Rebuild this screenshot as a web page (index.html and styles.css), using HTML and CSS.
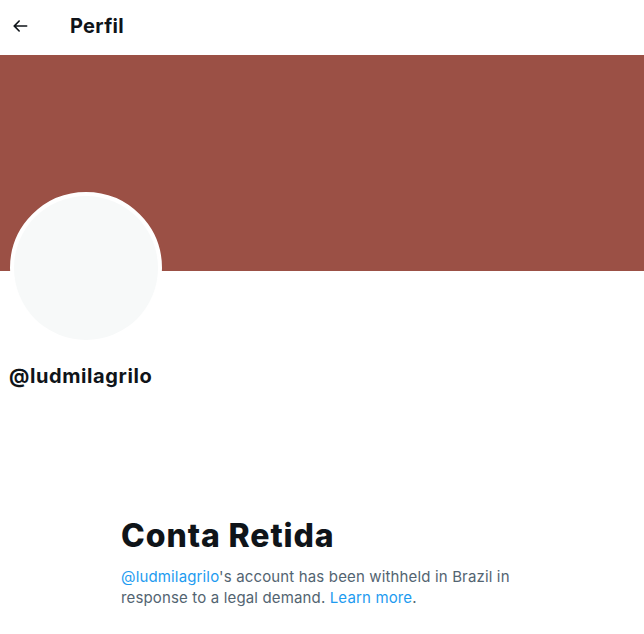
FILE: index.html
```html
<!DOCTYPE html>
<html lang="pt">
<head>
  <meta charset="UTF-8" />
  <title>Perfil</title>
  <link rel="stylesheet" href="styles.css">
</head>
<body>
  <!-- Cabeçalho -->
  <div class="topbar">
    <div class="back-btn">
      <svg viewBox="0 0 24 24" width="20" height="20"><path d="M20 11H7.414l4.293-4.293c.39-.39.39-1.023 0-1.414s-1.023-.39-1.414 0l-6 6c-.39.39-.39 1.023 0 1.414l6 6c.195.195.45.293.707.293s.512-.098.707-.293c.39-.39.39-1.023 0-1.414L7.414 13H20c.553 0 1-.447 1-1s-.447-1-1-1z"/></svg>
    </div>
    <h2 class="title">Perfil</h2>
  </div>

  <div class="banner"></div>

  <div class="profile">
    <div class="avatar"><div class="avatar-inner"></div></div>
    <div class="handle">@ludmilagrilo</div>
  </div>

  <div class="withheld">
    <h1>Conta Retida</h1>
    <p><a href="#">@ludmilagrilo</a>'s account has been withheld in Brazil in response to a legal demand. <a href="#">Learn more</a>.</p>
  </div>
</body>
</html>
```

FILE: styles.css
```css
body {
  margin: 0;
  font-family: Inter, "Liberation Sans", Arial, sans-serif;
  background-color: #fff;
  color: #0f1419;
}
.topbar {
  height: 51px;
  display: flex;
  align-items: center;
  padding: 0 10px 4px;
}
.back-btn {
  width: 20px;
  height: 20px;
}
.back-btn svg {
  fill: #0f1419;
  display: block;
}
.title {
  margin: 0 0 0 40px;
  font-size: 20px;
  font-weight: 700;
  line-height: 24px;
  letter-spacing: 0.3px;
}
.banner {
  height: 216px;
  background-color: #9b5045;
}
.profile {
  padding: 0 10px;
}
.avatar {
  width: 144px;
  height: 144px;
  border: 4px solid #fff;
  border-radius: 50%;
  margin-top: -79px;
  background-color: #fff;
}
.avatar-inner {
  width: 100%;
  height: 100%;
  border-radius: 50%;
  background-color: #f7f9f9;
}
.handle {
  margin-top: 20px;
  margin-left: -1px;
  font-size: 20px;
  font-weight: 700;
  line-height: 24px;
  letter-spacing: 0.6px;
}
.withheld {
  max-width: 400px;
  margin: 130px auto 0;
}
.withheld h1 {
  margin: 0 0 12px -1px;
  font-size: 32px;
  font-weight: 800;
  line-height: 36px;
  letter-spacing: 0.9px;
}
.withheld p {
  margin: 0 0 0 -1px;
  font-size: 15px;
  line-height: 21px;
  letter-spacing: 0.15px;
  color: #536471;
}
.withheld a {
  color: #1d9bf0;
  text-decoration: none;
}
```
